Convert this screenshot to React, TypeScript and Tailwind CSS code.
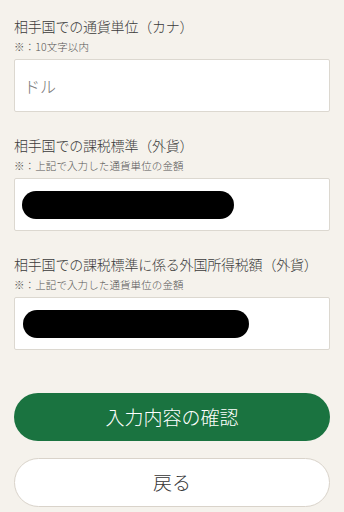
import React from "react";

function Field({ title, note, children, first }: { title: string; note: string; children: React.ReactNode; first?: boolean }) {
  return (
    <div className={first ? "" : "mt-[22px]"}>
      <div className="text-[14px] leading-[22px] text-[#3a3a3a] whitespace-nowrap tracking-[-0.2px]">{title}</div>
      <div className="mt-[3px] text-[10.5px] leading-[14px] text-[#555] tracking-[0.1px]">{note}</div>
      <div className="mt-[5px] h-[53px] bg-white border border-[#dcd8d0] rounded-[2px] flex items-center px-[8px]">
        {children}
      </div>
    </div>
  );
}

export default function App() {
  return (
    <div
      className="w-[344px] h-[512px] bg-[#f5f2ec] px-[14px] pt-[15px] overflow-hidden font-light"
      style={{ fontFamily: '"Noto Sans CJK JP", "Noto Sans", sans-serif' }}
    >
      <Field first title="相手国での通貨単位（カナ）" note="※：10文字以内">
        <span className="text-[16px] text-[#777] pl-[1px]">ドル</span>
      </Field>
      <Field title="相手国での課税標準（外貨）" note="※：上記で入力した通貨単位の金額">
        <div className="w-[212px] h-[28px] rounded-full bg-black -ml-[1px]" />
      </Field>
      <Field title="相手国での課税標準に係る外国所得税額（外貨）" note="※：上記で入力した通貨単位の金額">
        <div className="w-[226px] h-[28px] rounded-full bg-black" />
      </Field>
      <button className="mt-[43px] w-full h-[48px] rounded-full bg-[#1a7340] text-white text-[19px] font-light flex items-center justify-center">
        入力内容の確認
      </button>
      <button className="mt-[17px] w-full h-[49px] rounded-full bg-white border border-[#d9d3ca] text-[#333] text-[19px] font-light flex items-center justify-center">
        戻る
      </button>
    </div>
  );
}
